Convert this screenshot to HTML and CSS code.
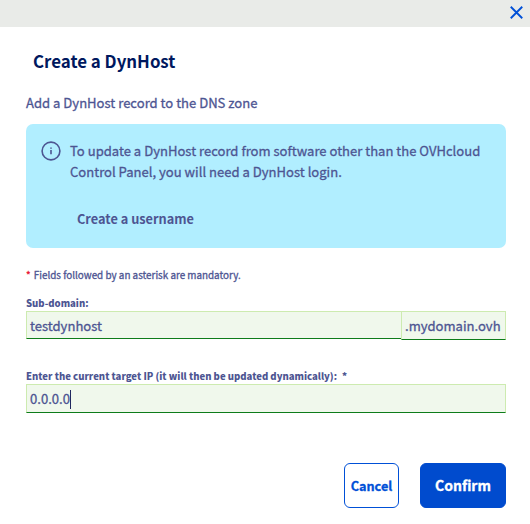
FILE: index.html
```html
<!DOCTYPE html>
<html lang="en">
<head>
<meta charset="utf-8">
<title>Create a DynHost</title>
<link rel="stylesheet" href="styles.css">
</head>
<body>
<header class="bar">
  <svg class="close" viewBox="0 0 12 12"><path d="M.7.7 11.3 11.3M11.3.7.7 11.3"/></svg>
</header>
<main class="dialog">
  <h1 class="title">Create a DynHost</h1>
  <p class="intro">Add a DynHost record to the DNS zone</p>
  <section class="notice">
    <svg class="info" viewBox="0 0 20 20"><circle cx="10" cy="10" r="8.9"/><path d="M10 9v4.2M10 6.4v1.4"/></svg>
    <div class="notice-body">
      <p>To update a DynHost record from software other than the OVHcloud<br>Control Panel, you will need a DynHost login.</p>
      <a class="create">Create a username</a>
    </div>
  </section>
  <p class="mandatory"><span class="star">*</span> Fields followed by an asterisk are mandatory.</p>
  <div class="label">Sub-domain:</div>
  <div class="row">
    <div class="input sub">testdynhost</div>
    <div class="input suffix">.mydomain.ovh</div>
  </div>
  <div class="label ip-label">Enter the current target IP (it will then be updated dynamically):<span class="req">*</span></div>
  <div class="input ip">0.0.0.0<span class="caret"></span></div>
  <footer class="actions">
    <button class="btn cancel">Cancel</button>
    <button class="btn confirm">Confirm</button>
  </footer>
</main>
</body>
</html>
```
FILE: styles.css
```css
* { box-sizing: border-box; }
body {
  margin: 0;
  background: #fff;
  color: #4d5592;
  font: 13.07px/21px "Noto Sans CJK SC", "Noto Sans", sans-serif;
  -webkit-text-stroke: 0.3px currentColor;
  white-space: nowrap;
  overflow: hidden;
}
h1, p { margin: 0; }
.bar {
  height: 27px;
  padding: 6px 7px 0 0;
  background: #e9ebe8;
  display: flex;
  justify-content: flex-end;
}
.close { width: 13px; height: 13px; fill: none; stroke: #0050d7; stroke-width: 1.7; }
.dialog { padding: 0 24px 0 26px; }
.title {
  padding: 21px 0 0 7px;
  color: #00185e;
  font-size: 16.87px;
  line-height: 26px;
  font-weight: 700;
  -webkit-text-stroke: 0;
}
.intro { margin-top: 18px; }
.notice {
  display: flex;
  height: 124px;
  margin-top: 11px;
  padding: 16px 0 0 15px;
  background: #b1eeff;
  border-radius: 7px;
}
.info { width: 20px; height: 20px; margin: 1px 9px 0 0; fill: none; stroke: #4d5592; stroke-width: 1.6; }
.create {
  display: block;
  margin: 26px 0 0 7px;
  font-size: 12.75px;
  font-weight: 700;
  -webkit-text-stroke: 0;
}
.mandatory { margin-top: 19px; font-size: 9.87px; line-height: 16px; }
.star { color: #e8112d; margin-right: 1px; }
.label {
  margin-top: 12px;
  font-size: 9.56px;
  line-height: 16px;
  font-weight: 900;
  -webkit-text-stroke: 0;
}
.row { display: flex; height: 29px; align-items: flex-start; }
.input {
  height: 29px;
  padding-left: 3px;
  border: 1px solid #cdebb0;
  border-bottom-color: #0e7c1a;
  background: #f0f8ec;
  line-height: 27px;
}
.sub { width: 375px; height: 28px; border-right: 0; }
.suffix { flex: 1; }
.ip-label { margin-top: 28px; }
.req { margin-left: 5px; }
.caret { display: inline-block; width: 1px; height: 19px; background: #20285f; vertical-align: -5px; }
.actions { display: flex; justify-content: flex-end; gap: 21px; margin-top: 50px; }
.btn {
  height: 45px;
  padding: 0;
  border: 1px solid #0050d7;
  border-radius: 6px;
  font: 700 12.65px/43px "Noto Sans CJK SC", sans-serif;
}
.cancel { width: 55px; background: #fff; color: #0050d7; }
.confirm { width: 86px; border-color: #004bce; background: #004bce; color: #fff; font-size: 14.01px; }
```
